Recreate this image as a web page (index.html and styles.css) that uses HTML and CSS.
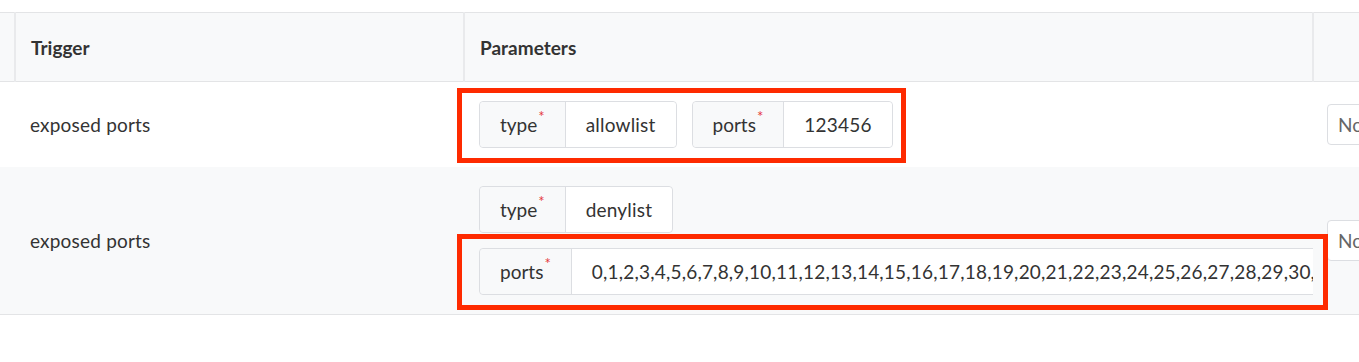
FILE: index.html
```html
<!DOCTYPE html>
<html lang="en">
	<head>
		<meta charset="UTF-8" />
		<meta name="viewport" content="width=device-width, initial-scale=1.0" />
		<title>Policy triggers</title>
		<link rel="stylesheet" href="styles.css">
	</head>
	<body>
		<div class="table-wrap">
			<table class="trigger-table">
				<colgroup>
					<col class="col-select" />
					<col class="col-trigger" />
					<col class="col-params" />
					<col class="col-action" />
				</colgroup>
				<thead>
					<tr>
						<th></th>
						<th>Trigger</th>
						<th>Parameters</th>
						<th></th>
					</tr>
				</thead>
				<tbody>
					<tr>
						<td></td>
						<td class="trigger-name">exposed ports</td>
						<td class="params-cell">
							<div class="params">
								<div class="param">
									<span class="param-label">type<sup>*</sup></span>
									<span class="param-value">allowlist</span>
								</div>
								<div class="param">
									<span class="param-label">ports<sup>*</sup></span>
									<span class="param-value">123456</span>
								</div>
							</div>
						</td>
						<td class="action-cell"><span class="select">None</span></td>
					</tr>
					<tr class="striped">
						<td></td>
						<td class="trigger-name">exposed ports</td>
						<td class="params-cell">
							<div class="params">
								<div class="param">
									<span class="param-label">type<sup>*</sup></span>
									<span class="param-value">denylist</span>
								</div>
								<div class="param param-long">
									<span class="param-label">ports<sup>*</sup></span>
									<span class="param-value">0,1,2,3,4,5,6,7,8,9,10,11,12,13,14,15,16,17,18,19,20,21,22,23,24,25,26,27,28,29,30,31,32,33,34,35</span>
								</div>
							</div>
						</td>
						<td class="action-cell"><span class="select">None</span></td>
					</tr>
				</tbody>
			</table>

			<!-- annotation boxes -->
			<div class="mark mark-first"></div>
			<div class="mark mark-second"></div>
		</div>
	</body>
</html>
```

FILE: styles.css
```css
body {
	margin: 0;
	padding-top: 12px;
	font-family: 'Lato', 'Noto Sans', sans-serif;
	font-size: 19px;
	color: #333;
	background: white;
	overflow: hidden;
}
.table-wrap {
	position: relative;
	width: 1359px;
	overflow: hidden;
}
.trigger-table {
	border-collapse: collapse;
	table-layout: fixed;
	width: 1420px;
}
.col-select {
	width: 15px;
}
.col-trigger {
	width: 449px;
}
.col-params {
	width: 849px;
}
.col-action {
	width: 107px;
}
th {
	height: 68px;
	padding: 0 15px;
	text-align: left;
	font-weight: bold;
	background-color: #f8f9fa;
	border-top: 1px solid #e3e4e6;
	border-bottom: 1px solid #e3e4e6;
	border-right: 2px solid #e9eaec;
}
th:first-child {
	padding: 0;
}
td {
	padding: 0 15px;
	vertical-align: middle;
}
.trigger-name {
	letter-spacing: 0.2px;
}
tbody tr:last-child td {
	border-bottom: 1px solid #e3e4e6;
}
.striped td {
	background-color: #f8f9fa;
}
.params-cell {
	padding: 19px 0 19px 15px;
}
.params {
	display: flex;
	flex-wrap: wrap;
	gap: 15px;
	overflow: hidden;
}
.param {
	display: flex;
	border: 1px solid #dcdee2;
	border-radius: 4px;
	line-height: 25px;
	white-space: nowrap;
}
.param-long {
	flex-shrink: 0;
}
.param-label {
	padding: 10px 20px;
	background-color: #f8f9fa;
	border-right: 1px solid #dcdee2;
	border-radius: 4px 0 0 4px;
}
.param-label sup {
	color: #e5383b;
	font-size: 15px;
	line-height: 0;
	vertical-align: 10px;
	margin-left: 1px;
}
.param-value {
	padding: 10px 20px;
	letter-spacing: 0.2px;
	background: white;
	border-radius: 0 4px 4px 0;
}
.action-cell {
	padding-left: 14px;
}
.select {
	display: inline-block;
	padding: 7px 10px;
	line-height: 25px;
	color: #666;
	background: white;
	border: 1px solid #dcdee2;
	border-radius: 4px;
}
.mark {
	position: absolute;
	border: 5px solid #fe2a00;
	box-sizing: border-box;
}
.mark-first {
	left: 457px;
	top: 76px;
	width: 449px;
	height: 75px;
}
.mark-second {
	left: 457px;
	top: 222px;
	width: 871px;
	height: 76px;
}
```
